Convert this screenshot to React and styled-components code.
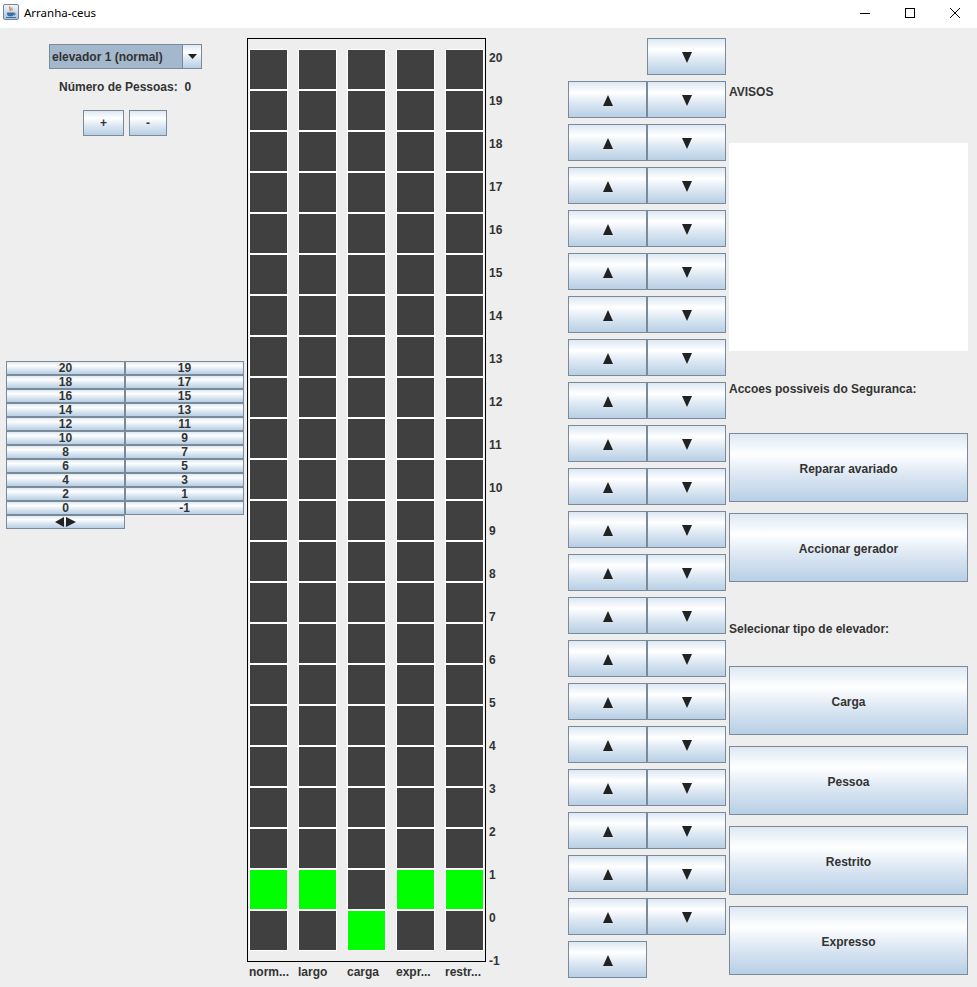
import React from 'react';
import styled, { createGlobalStyle } from 'styled-components';

const GlobalStyle = createGlobalStyle`
  html, body { margin: 0; padding: 0; background: #eeeeee; }
  body { font-family: "Liberation Sans", Arial, sans-serif; }
  * { box-sizing: border-box; }
`;

const ocean = 'linear-gradient(to bottom, #dde8f3 0%, #ffffff 30%, #dde8f3 60%, #b8cfe5 100%)';
const TEXT = '#333333';
const BORDER = '#7a8a99';

const Window = styled.div`
  width: 977px;
  height: 987px;
  display: flex;
  flex-direction: column;
  background: #eeeeee;
  overflow: hidden;
`;

const TitleBar = styled.div`
  height: 28px;
  flex-shrink: 0;
  background: #ffffff;
  display: flex;
  align-items: flex-start;
`;

const TitleIcon = styled.svg`
  margin: 4px 0 0 3px;
  width: 16px;
  height: 16px;
`;

const TitleText = styled.span`
  margin: 5px 0 0 5px;
  font-family: "Noto Sans", sans-serif;
  font-size: 11.5px;
  line-height: 16px;
  color: #000000;
`;

const WinButtons = styled.div`
  margin-left: auto;
  display: flex;
  height: 100%;
`;

const WinButton = styled.div`
  width: 45px;
  height: 26px;
  display: flex;
  align-items: center;
  justify-content: center;
`;

const Content = styled.div`
  flex: 1;
  display: flex;
  align-items: flex-start;
`;

/* ---------- left column ---------- */
const LeftColumn = styled.div`
  width: 247px;
  flex-shrink: 0;
  display: flex;
  flex-direction: column;
`;

const Combo = styled.div`
  margin: 16px 0 0 49px;
  width: 153px;
  height: 25px;
  border: 1px solid ${BORDER};
  display: flex;
`;

const ComboText = styled.div`
  flex: 1;
  background: #a3b8cc;
  color: ${TEXT};
  font-weight: bold;
  font-size: 12px;
  display: flex;
  align-items: center;
  padding: 1px 0 0 2px;
`;

const ComboArrow = styled.div`
  width: 19px;
  border-left: 1px solid ${BORDER};
  background: ${ocean};
  display: flex;
  align-items: center;
  justify-content: center;
`;

const CountLabel = styled.div`
  margin: 11px 0 0 59px;
  height: 15px;
  line-height: 15px;
  font-size: 12px;
  font-weight: bold;
  color: ${TEXT};
  white-space: pre;
`;

const SmallButtons = styled.div`
  margin: 15px 0 0 83px;
  display: flex;
  gap: 5px;
`;

const SmallButton = styled.div`
  width: ${(p) => p.$w}px;
  height: 26px;
  border: 1px solid ${BORDER};
  background: ${ocean};
  color: ${TEXT};
  font-size: 12px;
  font-weight: bold;
  display: flex;
  align-items: center;
  justify-content: center;
`;

const FloorTable = styled.div`
  margin: 225px 0 0 6px;
  display: grid;
  grid-template-columns: 119px 119px;
  grid-auto-rows: 14px;
`;

const TableCell = styled.div`
  border: 1px solid ${BORDER};
  background: ${ocean};
  color: ${TEXT};
  font-size: 12px;
  font-weight: bold;
  line-height: 12px;
  display: flex;
  align-items: center;
  justify-content: center;
`;

/* ---------- shaft ---------- */
const ShaftWrap = styled.div`
  display: flex;
  flex-direction: column;
  flex-shrink: 0;
`;

const Shaft = styled.div`
  margin-top: 10px;
  width: 239px;
  height: 924px;
  border: 1px solid #000000;
  padding: 10px 1px;
  display: grid;
  grid-template-columns: repeat(5, 39px);
  column-gap: 10px;
`;

const ShaftColumn = styled.div`
  display: flex;
  flex-direction: column;
`;

const Car = styled.div`
  width: 39px;
  height: 41px;
  border: 1px solid #ffffff;
  background: ${(p) => (p.$on ? '#00ff00' : '#404040')};
`;

const Names = styled.div`
  margin-top: 3px;
  padding-left: 2px;
  display: grid;
  grid-template-columns: repeat(5, 39px);
  column-gap: 10px;
`;

const Name = styled.div`
  font-size: 12px;
  font-weight: bold;
  line-height: 15px;
  color: ${TEXT};
  white-space: nowrap;
`;

const FloorNumbers = styled.div`
  margin: 9px 0 0 3px;
  width: 20px;
  display: flex;
  flex-direction: column;
`;

const FloorNumber = styled.div`
  height: 43px;
  line-height: 43px;
  font-size: 12px;
  font-weight: bold;
  color: ${TEXT};
  white-space: nowrap;
`;

/* ---------- call buttons ---------- */
const CallGrid = styled.div`
  margin: 10px 0 0 59px;
  display: grid;
  grid-template-columns: 79px 79px;
  grid-auto-rows: 37px;
  row-gap: 6px;
  flex-shrink: 0;
`;

const ArrowButton = styled.div`
  border: 1px solid ${BORDER};
  background: ${ocean};
  display: flex;
  align-items: center;
  justify-content: center;
  padding-top: 1px;
`;

/* ---------- right column ---------- */
const RightColumn = styled.div`
  margin-left: 3px;
  width: 239px;
  display: flex;
  flex-direction: column;
`;

const Heading = styled.div`
  margin-top: ${(p) => p.$mt}px;
  height: 16px;
  line-height: 16px;
  font-size: 12px;
  font-weight: bold;
  color: ${TEXT};
  white-space: nowrap;
`;

const Notices = styled.div`
  margin-top: 43px;
  height: 208px;
  background: #ffffff;
`;

const BigButton = styled.div`
  margin-top: ${(p) => p.$mt}px;
  height: 69px;
  border: 1px solid ${BORDER};
  background: ${ocean};
  color: ${TEXT};
  font-size: 12px;
  font-weight: bold;
  display: flex;
  align-items: center;
  justify-content: center;
  padding-top: 2px;
`;

const Up = () => (
  <svg width="10" height="11" viewBox="0 0 10 11">
    <polygon points="0,11 5,0 10,11" fill="#222" />
  </svg>
);

const Down = () => (
  <svg width="10" height="11" viewBox="0 0 10 11">
    <polygon points="0,0 10,0 5,11" fill="#222" />
  </svg>
);

const JavaIcon = () => (
  <TitleIcon viewBox="0 0 16 16">
    <defs>
      <linearGradient id="jg" x1="0" y1="0" x2="0" y2="1">
        <stop offset="0" stopColor="#f4f8fc" />
        <stop offset="1" stopColor="#a9bfd6" />
      </linearGradient>
    </defs>
    <rect x="0.5" y="0.5" width="15" height="15" rx="1.5" fill="url(#jg)" stroke="#6f87a3" />
    <path d="M7 2.5 C5.5 4 8.5 5 7 6.8" stroke="#e0661c" strokeWidth="1.2" fill="none" />
    <path d="M9 3.5 C8 4.5 9.8 5.3 8.8 6.5" stroke="#e0661c" strokeWidth="1" fill="none" />
    <path d="M4 8.5 H11 V10 C11 11.5 9.5 12.3 7.5 12.3 C5.5 12.3 4 11.5 4 10 Z" fill="#3a6ea5" />
    <path d="M11 9 C12.8 9 12.8 11 11 11" stroke="#3a6ea5" strokeWidth="1" fill="none" />
    <rect x="3" y="13" width="10" height="1" fill="#3a6ea5" />
  </TitleIcon>
);

const columns = ['norm...', 'largo', 'carga', 'expr...', 'restr...'];
const greenRow = [20, 20, 21, 20, 20];
const ROWS = 22;
const floors = Array.from({ length: 22 }, (_, i) => 20 - i);
const tablePairs = [
  ['20', '19'], ['18', '17'], ['16', '15'], ['14', '13'], ['12', '11'],
  ['10', '9'], ['8', '7'], ['6', '5'], ['4', '3'], ['2', '1'], ['0', '-1'],
];

export default function App() {
  return (
    <>
      <GlobalStyle />
      <Window>
        <TitleBar>
          <JavaIcon />
          <TitleText>Arranha-ceus</TitleText>
          <WinButtons>
            <WinButton>
              <svg width="10" height="10" viewBox="0 0 10 10">
                <line x1="0" y1="5.5" x2="10" y2="5.5" stroke="#000" strokeWidth="1" />
              </svg>
            </WinButton>
            <WinButton>
              <svg width="10" height="10" viewBox="0 0 10 10">
                <rect x="0.5" y="0.5" width="9" height="9" stroke="#000" strokeWidth="1" fill="none" />
              </svg>
            </WinButton>
            <WinButton>
              <svg width="10" height="10" viewBox="0 0 10 10">
                <path d="M0 0 L10 10 M10 0 L0 10" stroke="#000" strokeWidth="1" />
              </svg>
            </WinButton>
          </WinButtons>
        </TitleBar>

        <Content>
          <LeftColumn>
            <Combo>
              <ComboText>elevador 1 (normal)</ComboText>
              <ComboArrow>
                <svg width="9" height="5" viewBox="0 0 9 5">
                  <polygon points="0,0 9,0 4.5,5" fill="#222" />
                </svg>
              </ComboArrow>
            </Combo>
            <CountLabel>{'Número de Pessoas:  0'}</CountLabel>
            <SmallButtons>
              <SmallButton $w={41}>+</SmallButton>
              <SmallButton $w={38}>-</SmallButton>
            </SmallButtons>
            <FloorTable>
              {tablePairs.map(([a, b]) => (
                <React.Fragment key={a}>
                  <TableCell>{a}</TableCell>
                  <TableCell>{b}</TableCell>
                </React.Fragment>
              ))}
              <TableCell>
                <svg width="21" height="10" viewBox="0 0 21 10">
                  <polygon points="0,5 9,0 9,10" fill="#222" />
                  <polygon points="11,0 21,5 11,10" fill="#222" />
                </svg>
              </TableCell>
            </FloorTable>
          </LeftColumn>

          <ShaftWrap>
            <Shaft>
              {columns.map((c, ci) => (
                <ShaftColumn key={c}>
                  {Array.from({ length: ROWS }, (_, r) => (
                    <Car key={r} $on={greenRow[ci] === r} />
                  ))}
                </ShaftColumn>
              ))}
            </Shaft>
            <Names>
              {columns.map((c) => (
                <Name key={c}>{c}</Name>
              ))}
            </Names>
          </ShaftWrap>

          <FloorNumbers>
            {floors.map((f) => (
              <FloorNumber key={f}>{f}</FloorNumber>
            ))}
          </FloorNumbers>

          <CallGrid>
            {floors.map((f, i) => (
              <React.Fragment key={f}>
                {i === 0 ? <div /> : <ArrowButton><Up /></ArrowButton>}
                {i === floors.length - 1 ? <div /> : <ArrowButton><Down /></ArrowButton>}
              </React.Fragment>
            ))}
          </CallGrid>

          <RightColumn>
            <Heading $mt={56}>AVISOS</Heading>
            <Notices />
            <Heading $mt={30}>Accoes possiveis do Seguranca:</Heading>
            <BigButton $mt={36}>Reparar avariado</BigButton>
            <BigButton $mt={11}>Accionar gerador</BigButton>
            <Heading $mt={39}>Selecionar tipo de elevador:</Heading>
            <BigButton $mt={29}>Carga</BigButton>
            <BigButton $mt={11}>Pessoa</BigButton>
            <BigButton $mt={11}>Restrito</BigButton>
            <BigButton $mt={11}>Expresso</BigButton>
          </RightColumn>
        </Content>
      </Window>
    </>
  );
}
